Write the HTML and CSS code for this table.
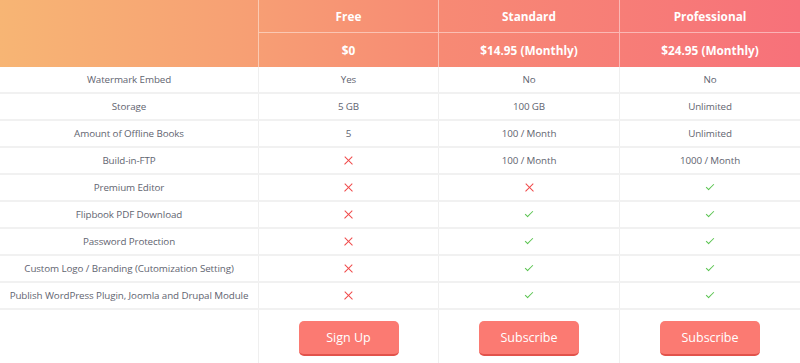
FILE: index.html
```html
<!DOCTYPE html>
<html>
<head>
  <meta charset="utf8">
  <title>Pricing</title>
  <link rel="stylesheet" href="styles.css">
</head>
<body>

<div class="pricing">
  <div class="pricing-head">
    <div class="head-blank"></div>
    <div class="head-cell">Free</div>
    <div class="head-cell">Standard</div>
    <div class="head-cell">Professional</div>
    <div class="head-cell">$0</div>
    <div class="head-cell">$14.95 (Monthly)</div>
    <div class="head-cell">$24.95 (Monthly)</div>
  </div>

  <div class="pricing-row">
    <div class="cell">Watermark Embed</div>
    <div class="cell">Yes</div>
    <div class="cell">No</div>
    <div class="cell">No</div>
  </div>
  <div class="pricing-row">
    <div class="cell">Storage</div>
    <div class="cell">5 GB</div>
    <div class="cell">100 GB</div>
    <div class="cell">Unlimited</div>
  </div>
  <div class="pricing-row">
    <div class="cell">Amount of Offline Books</div>
    <div class="cell">5</div>
    <div class="cell">100 / Month</div>
    <div class="cell">Unlimited</div>
  </div>
  <div class="pricing-row">
    <div class="cell">Build-in-FTP</div>
    <div class="cell"><span class="no"></span></div>
    <div class="cell">100 / Month</div>
    <div class="cell">1000 / Month</div>
  </div>
  <div class="pricing-row">
    <div class="cell">Premium Editor</div>
    <div class="cell"><span class="no"></span></div>
    <div class="cell"><span class="no"></span></div>
    <div class="cell"><span class="yes"></span></div>
  </div>
  <div class="pricing-row">
    <div class="cell">Flipbook PDF Download</div>
    <div class="cell"><span class="no"></span></div>
    <div class="cell"><span class="yes"></span></div>
    <div class="cell"><span class="yes"></span></div>
  </div>
  <div class="pricing-row">
    <div class="cell">Password Protection</div>
    <div class="cell"><span class="no"></span></div>
    <div class="cell"><span class="yes"></span></div>
    <div class="cell"><span class="yes"></span></div>
  </div>
  <div class="pricing-row">
    <div class="cell">Custom Logo / Branding (Cutomization Setting)</div>
    <div class="cell"><span class="no"></span></div>
    <div class="cell"><span class="yes"></span></div>
    <div class="cell"><span class="yes"></span></div>
  </div>
  <div class="pricing-row">
    <div class="cell">Publish WordPress Plugin, Joomla and Drupal Module</div>
    <div class="cell"><span class="no"></span></div>
    <div class="cell"><span class="yes"></span></div>
    <div class="cell"><span class="yes"></span></div>
  </div>
  <div class="pricing-row pricing-foot">
    <div class="cell"></div>
    <div class="cell"><button class="btn">Sign Up</button></div>
    <div class="cell"><button class="btn">Subscribe</button></div>
    <div class="cell"><button class="btn">Subscribe</button></div>
  </div>
</div>

</body>
</html>
```

FILE: styles.css
```css
body { padding: 0; margin: 0; background: #fff; font-family: "Open Sans", "Noto Sans", sans-serif; }
.pricing { width: 800px; }

.pricing-head { display: grid; grid-template-columns: 258px 180px 181px 181px; grid-template-rows: 33px 34px; background: linear-gradient(90deg, #f7b574 0%, #f7a074 30%, #f78a74 55%, #f7717a 100%); color: #fff; font-weight: 700; font-size: 11.8px; }
.head-blank { grid-row: 1 / 3; }
.head-cell { display: flex; align-items: center; justify-content: center; border-left: 1px solid rgba(255,255,255,0.45); }
.head-cell:nth-child(-n+4) { border-bottom: 1px solid rgba(255,255,255,0.45); }

.pricing-row { display: grid; grid-template-columns: 258px 180px 181px 181px; height: 27px; border-bottom: 2px solid #f1f1f1; box-sizing: border-box; }
.cell { display: flex; align-items: center; justify-content: center; font-size: 9.8px; letter-spacing: -0.1px; white-space: nowrap; color: #5f6470; border-left: 1px solid #efefef; }
.cell:first-child { border-left: none; }

.no { display: block; width: 9px; height: 9px; position: relative; }
.no::before, .no::after { content: ""; position: absolute; left: -1px; top: 4px; width: 11px; height: 1.3px; background: #f04848; transform: rotate(45deg); }
.no::after { transform: rotate(-45deg); }
.yes { display: block; width: 7px; height: 3px; border-left: 1.3px solid #59c34f; border-bottom: 1.3px solid #59c34f; transform: rotate(-45deg); margin-top: -3px; }

.pricing-foot { height: 54px; border-bottom: none; }
.pricing-foot .cell { align-items: flex-start; padding-top: 11px; }
.btn { width: 100px; height: 35px; border: none; border-bottom: 2px solid #e2524b; border-radius: 5px; background: #fb7a72; color: #fff; font-family: "Open Sans", "Noto Sans", sans-serif; font-size: 12.5px; cursor: pointer; }
```
